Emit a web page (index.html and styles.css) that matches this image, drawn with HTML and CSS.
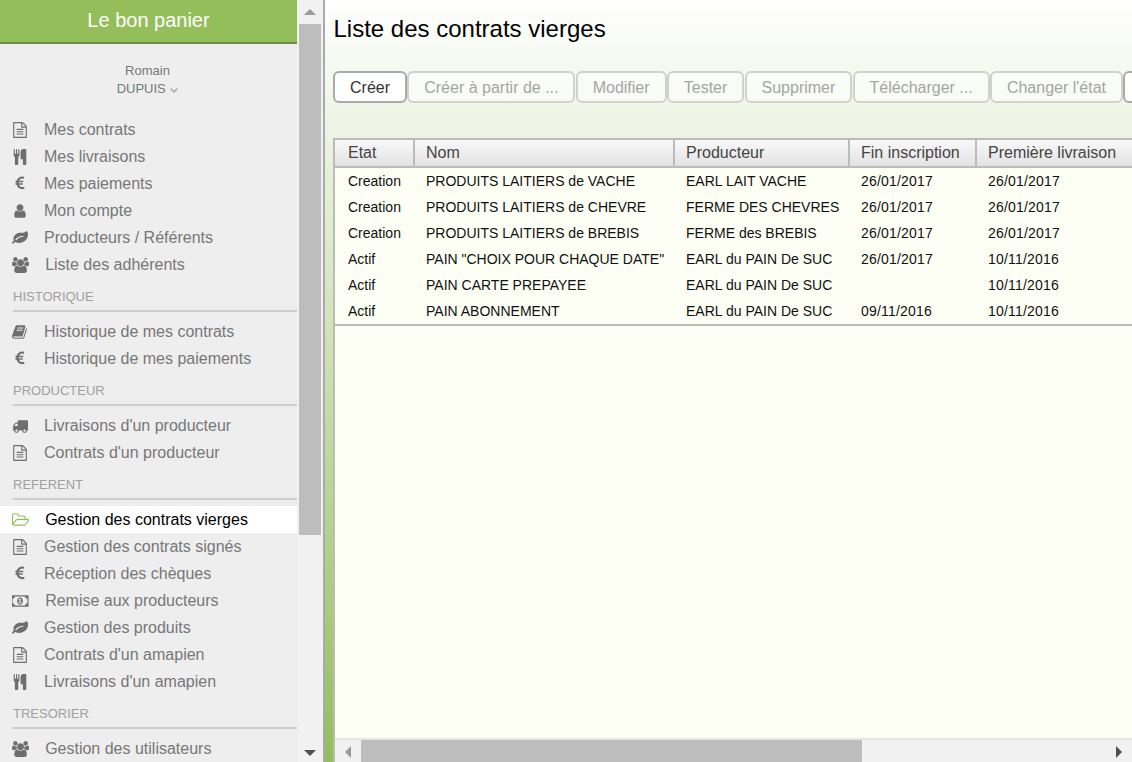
FILE: index.html
```html
<!DOCTYPE html>
<html lang="fr">
<head>
<meta charset="utf-8">
<title>Liste des contrats vierges</title>
<link rel="stylesheet" href="styles.css">
</head>
<body>
<svg class="defs" aria-hidden="true">
  <symbol id="i-doc" viewBox="0 0 1792 1792"><path d="M1596 380q28 28 48 76t20 88v1152q0 40-28 68t-68 28h-1344q-40 0-68-28t-28-68v-1600q0-40 28-68t68-28h896q40 0 88 20t76 48zm-444-244v376h376q-10-29-22-41l-313-313q-12-12-41-22zm384 1528v-1024h-416q-40 0-68-28t-28-68v-416h-768v1536h1280zm-1024-864q0-14 9-23t23-9h704q14 0 23 9t9 23v64q0 14-9 23t-23 9h-704q-14 0-23-9t-9-23v-64zm736 224q14 0 23 9t9 23v64q0 14-9 23t-23 9h-704q-14 0-23-9t-9-23v-64q0-14 9-23t23-9h704zm0 256q14 0 23 9t9 23v64q0 14-9 23t-23 9h-704q-14 0-23-9t-9-23v-64q0-14 9-23t23-9h704z"/></symbol>
  <symbol id="i-cut" viewBox="0 0 1792 1792"><path d="M832 64v640q0 61-35.5 111t-92.5 70v779q0 52-38 90t-90 38h-128q-52 0-90-38t-38-90v-779q-57-20-92.5-70t-35.5-111v-640q0-26 19-45t45-19 45 19 19 45v416q0 26 19 45t45 19 45-19 19-45v-416q0-26 19-45t45-19 45 19 19 45v416q0 26 19 45t45 19 45-19 19-45v-416q0-26 19-45t45-19 45 19 19 45zm768 0v1600q0 52-38 90t-90 38h-128q-52 0-90-38t-38-90v-512h-224q-13 0-22.5-9.5t-9.5-22.5v-800q0-132 94-226t226-94h256q26 0 45 19t19 45z"/></symbol>
  <symbol id="i-eur" viewBox="-384 0 1792 1792"><path d="M976 1244l35 159q3 12-3 22.5t-17 14.5l-5 1q-4 2-10.5 3.5t-16 4.5-21.5 5.5-25.5 5-30 5-33.5 4.5-36.5 3-38.5 1q-234 0-409-130.5t-238-351.5h-95q-13 0-22.5-9.5t-9.5-22.5v-113q0-13 9.5-22.5t22.5-9.5h66q-2-57 1-105h-67q-14 0-23-9t-9-23v-114q0-14 9-23t23-9h98q67-210 243.5-338t400.5-128q102 0 194 23 11 3 20 15 6 11 3 24l-43 159q-3 13-14 19.5t-24 2.5l-4-1q-4-1-11.5-2.5l-17.5-3.5-22.5-3.5-26-3-29-2.5-29.5-1q-126 0-226 64t-150 176h468q16 0 25 12 10 12 7 26l-24 114q-5 26-32 26h-488q-3 47 0 105h459q15 0 25 12 9 12 6 27l-24 112q-2 11-11 18.5t-20 7.5h-387q48 117 149.5 185.5t228.5 68.5q18 0 36-1.5t33.5-3.5 29.5-4.5 24.5-5 18.5-4.5l12-3 5-2q13-5 26 2 12 7 15 21z"/></symbol>
  <symbol id="i-user" viewBox="0 0 1792 1792"><path d="M1536 1399q0 109-62.5 187t-150.5 78h-854q-88 0-150.5-78t-62.5-187q0-85 8.5-160.5t31.5-152 58.5-131 94-89 134.5-34.5q131 128 313 128t313-128q76 0 134.5 34.5t94 89 58.5 131 31.5 152 8.5 160.5zm-256-887q0 159-112.5 271.5t-271.5 112.5-271.5-112.5-112.5-271.5 112.5-271.5 271.5-112.5 271.5 112.5 112.5 271.5z"/></symbol>
  <symbol id="i-leaf" viewBox="0 0 1792 1792"><path d="M1280 704q0-26-19-45t-45-19q-172 0-318 49.5t-259.5 134-235.5 219.5q-19 21-19 45 0 26 19 45t45 19q24 0 45-19 27-24 74-71t67-66q137-124 268.5-176t313.5-52q26 0 45-19t19-45zm512-198q0 95-20 193-46 224-184.5 383t-357.5 268q-214 108-438 108-148 0-286-47-15-5-88-42t-96-37q-16 0-39.5 32t-45 70-52.5 70-60 32q-43 0-63.5-17.5t-45.5-59.5q-2-4-6-11t-5.5-10-3-9.5-1.5-13.5q0-35 31-73.5t68-65.5 68-56 31-48q0-4-14-38t-16-44q-9-51-9-104 0-115 43.5-220t119-184.5 170.5-139 204-95.5q55-18 145-25.5t179.5-9 178.5-6 163.5-24 113.5-56.5l29.5-29.5 29.5-28 27-20 36.5-16 43.5-4.5q39 0 70.5 46t47.5 112 24 124 8 96z"/></symbol>
  <symbol id="i-users" viewBox="0 0 1920 1792"><path d="M593 896q-162 5-265 128h-134q-82 0-138-40.5t-56-118.5q0-353 124-353 6 0 43.5 21t97.5 42.5 119 21.5q67 0 133-23-5 37-5 66 0 139 81 256zm1071 637q0 120-73 189.5t-194 69.5h-874q-121 0-194-69.5t-73-189.5q0-53 3.5-103.5t14-109 26.5-108.5 43-97.5 62-81 85.5-53.5 111.5-20q10 0 43 21.5t73 48 107 48 135 21.5 135-21.5 107-48 73-48 43-21.5q61 0 111.5 20t85.5 53.5 62 81 43 97.5 26.5 108.5 14 109 3.5 103.5zm-1024-1277q0 106-75 181t-181 75-181-75-75-181 75-181 181-75 181 75 75 181zm704 384q0 159-112.5 271.5t-271.5 112.5-271.5-112.5-112.5-271.5 112.5-271.5 271.5-112.5 271.5 112.5 112.5 271.5zm576 225q0 78-56 118.5t-138 40.5h-134q-103-123-265-128 81-117 81-256 0-29-5-66 66 23 133 23 59 0 119-21.5t97.5-42.5 43.5-21q124 0 124 353zm-128-609q0 106-75 181t-181 75-181-75-75-181 75-181 181-75 181 75 75 181z"/></symbol>
  <symbol id="i-book" viewBox="0 0 1792 1792"><path d="M1639 478q40 57 18 129l-275 906q-19 64-76.500 107.500t-122.500 43.500h-923q-77 0-148.500-53.500t-99.500-131.500q-24-67-2-127 0-4 3-27t4-37q1-8-3-21.500t-3-19.500q2-11 8-21t16.500-23.500 16.500-23.500q23-38 45-91.500t30-91.500q3-10 .5-30t-.5-28q3-11 17-28t17-23q21-36 42-92t25-90q1-9-2.500-32t.5-28q4-13 22-30.500t22-22.500q19-26 42.500-84.500t27.500-96.500q1-8-3-25.500t-2-26.500q2-8 9-18t18-23 17-21q8-12 16.500-30.500t15-35 16-36 19.500-32 26.500-23.500 36-11.500 47.500 5.500l-1 3q38-9 51-9h761q74 0 114 56t18 130l-274 906q-36 119-71.500 153.500t-128.500 34.500h-869q-27 0-38 15-11 16-1 43 24 70 144 70h923q29 0 56-15.500t35-41.500l300-987q7-22 5-57 38 15 59 43zm-1064 2q-4 13 2 22.500t20 9.500h608q13 0 25.500-9.500t16.500-22.500l21-64q4-13-2-22.500t-20-9.500h-608q-13 0-25.500 9.500t-16.500 22.500zm-83 256q-4 13 2 22.500t20 9.500h608q13 0 25.500-9.500t16.500-22.500l21-64q4-13-2-22.500t-20-9.500h-608q-13 0-25.500 9.500t-16.500 22.500z"/></symbol>
  <symbol id="i-truck" viewBox="0 0 1792 1792"><path d="M640 1408q0-52-38-90t-90-38-90 38-38 90 38 90 90 38 90-38 38-90zm-384-512h384v-256h-158q-13 0-22 9l-195 195q-9 9-9 22v30zm1280 512q0-52-38-90t-90-38-90 38-38 90 38 90 90 38 90-38 38-90zm256-1088v1024q0 15-4 26.500t-13.500 18.500-16.500 11.500-23.500 6-22.500 2-25.500 0-22.500-.5q0 106-75 181t-181 75-181-75-75-181h-384q0 106-75 181t-181 75-181-75-75-181h-64q-3 0-22.500.5t-25.500 0-22.500-2-23.500-6-16.500-11.500-13.500-18.500-4-26.500q0-26 19-45t45-19v-320q0-8-.5-35t0-38 2.500-34.500 6.500-37 14-30.500 22.500-30l198-198q19-19 50.500-32t58.500-13h160v-192q0-26 19-45t45-19h1024q26 0 45 19t19 45z"/></symbol>
  <symbol id="i-money" viewBox="0 0 1920 1792"><path d="M704 1152h384v-96h-128v-448h-114l-148 137 77 80q42-37 55-57h2v288h-128v96zm512-256q0 70-21 142t-59.500 134-101.500 101-138 39-138-39-101.500-101-59.500-134-21-142 21-142 59.500-134 101.500-101 138-39 138 39 101.500 101 59.500 134 21 142zm512 256v-512q-106 0-181-75t-75-181h-1152q0 106-75 181t-181 75v512q106 0 181 75t75 181h1152q0-106 75-181t181-75zm128-832v1152q0 26-19 45t-45 19h-1792q-26 0-45-19t-19-45v-1152q0-26 19-45t45-19h1792q26 0 45 19t19 45z"/></symbol>
  <symbol id="i-folder" viewBox="0 0 1920 1792"><path d="M1781 931q0-35-53-35h-1088q-40 0-85.500 21.500t-71.500 52.500l-294 363q-18 24-18 40 0 35 53 35h1088q40 0 86-22t71-53l294-363q18-22 18-39zm-1141-163h768v-160q0-40-28-68t-68-28h-576q-40 0-68-28t-28-68v-64q0-40-28-68t-68-28h-320q-40 0-68 28t-28 68v853l256-315q44-53 116-87.500t140-34.500zm1269 163q0 62-46 120l-295 363q-43 53-116 87.500t-140 34.500h-1088q-92 0-158-66t-66-158v-960q0-92 66-158t158-66h320q92 0 158 66t66 158v32h544q92 0 158 66t66 158v160h192q54 0 99 24.500t67 70.500q15 32 15 68z"/></symbol>
</svg>

<aside class="sidebar">
  <header class="brand">Le bon panier</header>
  <div class="user">
    <div>Romain</div>
    <div>DUPUIS <svg class="chev" viewBox="0 0 8 5"><polyline points="0.7,0.7 4,3.8 7.3,0.7"/></svg></div>
  </div>
  <nav>
    <a class="item"><svg class="ico"><use href="#i-doc"/></svg>Mes contrats</a>
    <a class="item"><svg class="ico"><use href="#i-cut"/></svg>Mes livraisons</a>
    <a class="item"><svg class="ico"><use href="#i-eur"/></svg>Mes paiements</a>
    <a class="item"><svg class="ico"><use href="#i-user"/></svg>Mon compte</a>
    <a class="item"><svg class="ico"><use href="#i-leaf"/></svg>Producteurs / Référents</a>
    <a class="item"><svg class="ico wide"><use href="#i-users"/></svg>Liste des adhérents</a>
    <div class="section">HISTORIQUE</div>
    <a class="item"><svg class="ico"><use href="#i-book"/></svg>Historique de mes contrats</a>
    <a class="item"><svg class="ico"><use href="#i-eur"/></svg>Historique de mes paiements</a>
    <div class="section">PRODUCTEUR</div>
    <a class="item"><svg class="ico"><use href="#i-truck"/></svg>Livraisons d'un producteur</a>
    <a class="item"><svg class="ico"><use href="#i-doc"/></svg>Contrats d'un producteur</a>
    <div class="section">REFERENT</div>
    <a class="item active"><svg class="ico wide"><use href="#i-folder"/></svg>Gestion des contrats vierges</a>
    <a class="item"><svg class="ico"><use href="#i-doc"/></svg>Gestion des contrats signés</a>
    <a class="item"><svg class="ico"><use href="#i-eur"/></svg>Réception des chèques</a>
    <a class="item"><svg class="ico wide"><use href="#i-money"/></svg>Remise aux producteurs</a>
    <a class="item"><svg class="ico"><use href="#i-leaf"/></svg>Gestion des produits</a>
    <a class="item"><svg class="ico"><use href="#i-doc"/></svg>Contrats d'un amapien</a>
    <a class="item"><svg class="ico"><use href="#i-cut"/></svg>Livraisons d'un amapien</a>
    <div class="section">TRESORIER</div>
    <a class="item"><svg class="ico wide"><use href="#i-users"/></svg>Gestion des utilisateurs</a>
  </nav>
</aside>

<div class="vscroll">
  <div class="vs-btn"><svg class="arrow" viewBox="0 0 12 6"><polygon class="off" points="6,0 12,6 0,6"/></svg></div>
  <div class="vs-thumb"></div>
  <div class="vs-fill"><svg class="arrow" viewBox="0 0 12 6"><polygon class="on" points="0,0 12,0 6,6"/></svg></div>
</div>

<main class="main">
  <h1 class="title">Liste des contrats vierges</h1>
  <div class="toolbar">
    <button class="btn">Créer</button>
    <button class="btn off">Créer à partir de ...</button>
    <button class="btn off">Modifier</button>
    <button class="btn off">Tester</button>
    <button class="btn off">Supprimer</button>
    <button class="btn off">Télécharger ...</button>
    <button class="btn off">Changer l'état</button>
    <button class="btn more"></button>
  </div>
  <section class="panel">
    <div class="table-wrap">
      <table class="grid">
        <colgroup><col class="c1"><col class="c2"><col class="c3"><col class="c4"><col class="c5"></colgroup>
        <thead>
          <tr><th>Etat</th><th>Nom</th><th>Producteur</th><th>Fin inscription</th><th>Première livraison</th></tr>
        </thead>
        <tbody>
          <tr><td>Creation</td><td>PRODUITS LAITIERS de VACHE</td><td>EARL LAIT VACHE</td><td>26/01/2017</td><td>26/01/2017</td></tr>
          <tr><td>Creation</td><td>PRODUITS LAITIERS de CHEVRE</td><td>FERME DES CHEVRES</td><td>26/01/2017</td><td>26/01/2017</td></tr>
          <tr><td>Creation</td><td>PRODUITS LAITIERS de BREBIS</td><td>FERME des BREBIS</td><td>26/01/2017</td><td>26/01/2017</td></tr>
          <tr><td>Actif</td><td>PAIN "CHOIX POUR CHAQUE DATE"</td><td>EARL du PAIN De SUC</td><td>26/01/2017</td><td>10/11/2016</td></tr>
          <tr><td>Actif</td><td>PAIN CARTE PREPAYEE</td><td>EARL du PAIN De SUC</td><td></td><td>10/11/2016</td></tr>
          <tr><td>Actif</td><td>PAIN ABONNEMENT</td><td>EARL du PAIN De SUC</td><td>09/11/2016</td><td>10/11/2016</td></tr>
        </tbody>
      </table>
    </div>
    <div class="hscroll">
      <div class="hs-btn"><svg class="harrow" viewBox="0 0 6 12"><polygon class="off" points="6,0 6,12 0,6"/></svg></div>
      <div class="hs-thumb"></div>
      <div class="hs-fill"></div>
      <div class="hs-btn"><svg class="harrow" viewBox="0 0 6 12"><polygon class="on" points="0,0 6,6 0,12"/></svg></div>
    </div>
  </section>
</main>
</body>
</html>
```

FILE: styles.css
```css
* { box-sizing: border-box; }
html, body { height: 100%; }
body {
  margin: 0;
  display: flex;
  height: 100vh;
  overflow: hidden;
  font-family: "Liberation Sans", Arial, sans-serif;
  background: #fff;
}
.defs { width: 0; height: 0; position: absolute; }

/* sidebar */
.sidebar {
  width: 297px;
  flex: none;
  height: 100%;
  overflow: hidden;
  background: #eee;
  color: #777;
}
.brand {
  height: 44px;
  background: #94be5a;
  border-bottom: 2px solid #6f8c44;
  color: #fff;
  font-size: 20px;
  line-height: 40px;
  text-align: center;
}
.user {
  height: 72px;
  padding: 18px 2px 0 0;
  font-size: 13px;
  line-height: 18px;
  text-align: center;
}
.chev { width: 8px; height: 5px; margin-left: 1px; vertical-align: 0; }
.chev polyline { fill: none; stroke: #aaa; stroke-width: 1.6; }
.item {
  display: flex;
  align-items: center;
  height: 27px;
  padding-left: 12px;
  font-size: 16px;
  color: #777;
}
.ico {
  width: 16px;
  height: 16px;
  margin-right: 16px;
  flex: none;
  fill: #6e6e6e;
}
.ico.wide { width: 17.14px; }
.item.active { background: #fff; color: #000; }
.item.active .ico { fill: #94be5a; }
.section {
  display: flex;
  align-items: center;
  height: 34px;
  padding-top: 4px;
  margin: 0 0 6px 13px;
  border-bottom: 2px solid #ccc;
  font-size: 13px;
  color: #a0a0a0;
}

/* vertical scrollbar */
.vscroll {
  width: 26px;
  flex: none;
  height: 100%;
  background: #f1f1f1;
  display: flex;
  flex-direction: column;
  padding: 0 2px;
}
.vs-btn { height: 24px; display: flex; align-items: center; justify-content: center; flex: none; }
.vs-thumb { height: 511px; background: #bdbdbd; flex: none; }
.vs-fill { flex: 1; display: flex; align-items: flex-end; justify-content: center; padding-bottom: 6px; }
.arrow { width: 12px; height: 6px; }
.harrow { width: 6px; height: 12px; }
.off { fill: #9a9a9a; }
.on { fill: #505050; }

/* main */
.main {
  flex: 1;
  min-width: 0;
  height: 100%;
  border-left: 2px solid #aaa;
  padding-left: 8px;
  background: linear-gradient(#fff, #94be5a);
  display: flex;
  flex-direction: column;
}
.title {
  height: 71px;
  margin: 0;
  padding: 15px 0 0 0.5px;
  font-size: 24px;
  line-height: 28px;
  font-weight: normal;
  color: #000;
  flex: none;
}
.toolbar {
  display: flex;
  gap: 0.2px;
  height: 32px;
  margin-bottom: 35px;
  flex: none;
  overflow: hidden;
}
.btn {
  flex: none;
  height: 32px;
  padding: 1px 15px 0;
  border: 2px solid #aaa;
  border-radius: 6px;
  background: #fff;
  color: #333;
  font: 16px "Liberation Sans", Arial, sans-serif;
}
.btn.off {
  border-color: #d0d2cb;
  background: rgba(255, 255, 255, 0.55);
  color: #a5a5a5;
}
.btn.more { width: 70px; }

/* table */
.panel {
  flex: 1;
  min-height: 0;
  display: flex;
  flex-direction: column;
  border-left: 2px solid #bbb;
}
.table-wrap { flex: 1; min-height: 0; overflow: hidden; background: #fdfff5; }
.grid {
  table-layout: fixed;
  width: 1000px;
  border-collapse: separate;
  border-spacing: 0;
}
.c1 { width: 78px; }
.c2 { width: 260px; }
.c3 { width: 175px; }
.c4 { width: 127px; }
.c5 { width: 360px; }
.grid th {
  box-sizing: content-box;
  height: 26px;
  padding: 0 0 0 11px;
  border-top: 2px solid #bbb;
  border-bottom: 2px solid #bbb;
  border-left: 2px solid #bbb;
  background: linear-gradient(#f9f9f9, #e2e2e2);
  font-size: 16px;
  font-weight: normal;
  text-align: left;
  color: #444;
}
.grid th:first-child { border-left: 0; padding-left: 13px; }
.grid td {
  height: 26px;
  padding: 0 0 0 13px;
  font-size: 14px;
  color: #111;
  white-space: nowrap;
}
.grid td:nth-child(n+4) { letter-spacing: 0.2px; }
.grid tbody tr:last-child td { height: 28px; border-bottom: 2px solid #bbb; }

/* horizontal scrollbar */
.hscroll {
  height: 24px;
  flex: none;
  display: flex;
  background: #f1f1f1;
  border-top: 2px solid #e6e6e6;
}
.hs-btn { width: 26px; flex: none; display: flex; align-items: center; justify-content: center; padding-top: 1px; }
.hs-thumb { width: 501px; background: #bdbdbd; flex: none; }
.hs-fill { flex: 1; }
```
